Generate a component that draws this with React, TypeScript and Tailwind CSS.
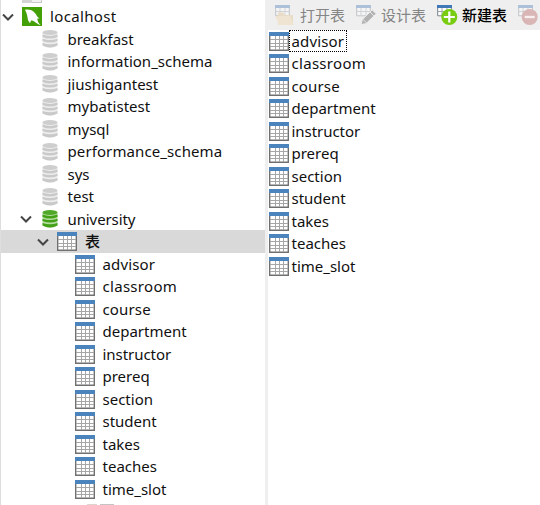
import React from 'react';

const databases = ['breakfast', 'information_schema', 'jiushigantest', 'mybatistest', 'mysql', 'performance_schema', 'sys', 'test'];
const tables = ['advisor', 'classroom', 'course', 'department', 'instructor', 'prereq', 'section', 'student', 'takes', 'teaches', 'time_slot'];

function TableIcon() {
  return (
    <svg className="h-[19px] w-5 shrink-0" viewBox="0 0 20 19">
      <path d="M.7 3v15.2h18.6V3" fill="#fff" stroke="#707070" strokeWidth="1.4" />
      <path d="M1 7.5h18M1 11.5h18M1 14.5h18M6.5 4v14M10.5 4v14M14.5 4v14" stroke="#a6a6a6" fill="none" />
      <path d="M0 0h20v4H0z" fill="#4b83bd" />
    </svg>
  );
}

function DatabaseIcon({ active = false }: { active?: boolean }) {
  const fill = active ? '#43a017' : '#c9c9c9';
  const edge = active ? '#50a829' : '#cecece';
  const band = active ? '#b5dda2' : '#eeeeee';
  return (
    <svg className="h-[18px] w-4 shrink-0" viewBox="0 0 16 18">
      <path d="M.5 2.5v13q7.5 4.5 15 0v-13z" fill={band} />
      <ellipse cx="8" cy="2.6" rx="7.5" ry="2.5" fill={edge} />
      <path d="M.5 4.5q7.5 2.8 15 0v2.4q-7.5 3-15 0zM.5 8.7q7.5 2.8 15 0v2.4q-7.5 3-15 0zM.5 12.9q7.5 2.8 15 0v2.6q-7.5 4.2-15 0z" fill={fill} />
    </svg>
  );
}

function Chevron() {
  return (
    <svg className="h-3 w-3 shrink-0" viewBox="0 0 12 12" fill="none" stroke="#454545" strokeWidth="2">
      <path d="m1 3.5 5 5 5-5" />
    </svg>
  );
}

function ServerIcon() {
  return (
    <svg className="h-[19px] w-5 shrink-0" viewBox="0 0 20 19">
      <path d="M0 0h20v19H0z" fill="#43a006" />
      <path d="M3 2.7c3-.6 6.3-.2 8.7 2 1.7 1.5 2.8 3 3.3 4.6l2.4 2.1-2.1.2c.2 2.5 1 4.5 3.2 6.5-2.6-.7-4.3-2.2-5.8-3.3-1.3-.9-2.3-1.2-3.7-1.3l-1 2.7-2-2.9C5.6 10.6 5.1 6.2 3 2.7Z" fill="#fff" />
    </svg>
  );
}

function MiniTable({ faded = false }: { faded?: boolean }) {
  return (
    <g opacity={faded ? 0.38 : 1}>
      <path d="M.7.8h13.6v10H.7z" fill="#fff" stroke="#77828d" />
      <path d="M5 2v8.5M10 2v8.5M1 6.5h13" stroke="#a0a8ae" />
      <path d="M0 0h15v3H0z" fill="#4079b6" />
    </g>
  );
}

function ToolIcon({ kind }: { kind: 'open' | 'design' | 'new' | 'delete' }) {
  return (
    <svg className="h-5 w-[21px] shrink-0" viewBox="0 0 21 20" fill="none">
      <MiniTable faded={kind !== 'new'} />
      {kind === 'open' && (
        <>
          <path d="M3 7.5h5l2 2.5h8v9.5H3z" fill="#e9dcc7" />
          <path d="M.3 11h14.5l4.2 9H4z" fill="#efe4d2" />
        </>
      )}
      {kind === 'design' && (
        <>
          <path d="m5 19.5 1.3-5L16.2 4.8l4 4L10 18.7z" fill="#b2b2b2" stroke="#efefef" />
          <path d="m14 7 4 4M6.8 14.2l3.8 3.8" stroke="#e6e6e6" />
        </>
      )}
      {kind === 'new' && (
        <>
          <circle cx="12.3" cy="12" r="8" fill="#78cc12" />
          <path d="M12.3 6.5v11M6.8 12h11" stroke="#fff" strokeWidth="2.2" />
        </>
      )}
      {kind === 'delete' && (
        <>
          <circle cx="11.7" cy="12" r="8" fill="#d9b5b5" />
          <path d="M6.7 12h10" stroke="#f7eeee" strokeWidth="2.4" />
        </>
      )}
    </svg>
  );
}

const tracking: Record<string, string> = {
  localhost: 'tracking-[0.35px]',
  classroom: 'tracking-[0.3px]',
  performance_schema: 'tracking-[0.1px]',
  advisor: 'tracking-[0.15px]',
  course: 'tracking-[0.15px]',
  mybatistest: 'tracking-[0.05px]',
  university: 'tracking-[-0.1px]',
  instructor: 'tracking-[-0.05px]',
};

function Label({ children }: { children: string }) {
  return <span className={'block pb-px whitespace-nowrap ' + (tracking[children] ?? '')}>{children}</span>;
}

export default function App() {
  return (
    <div className="flex h-[505px] w-[540px] overflow-hidden bg-white font-['Noto_Sans','Noto_Sans_CJK_SC',sans-serif] text-[15px] leading-[22px] text-[#101010]">
      <aside className="h-full w-[265px] shrink-0 overflow-hidden border-l border-[#dedede]">
        <div className="flex h-[5.25px] pl-[21px]">
          <div className="h-[3px] w-2.5 bg-[#d4d4d4]" />
          <div className="h-[3px] w-2.5 border-r border-b border-[#c8c8c8] bg-[#f2f2f2]" />
        </div>
        <div className="flex h-[22.5px] items-center pl-px">
          <Chevron />
          <span className="ml-2 flex"><ServerIcon /></span>
          <span className="ml-2"><Label>localhost</Label></span>
        </div>
        {databases.map((name) => (
          <div key={name} className="flex h-[22.5px] items-center gap-[9.5px] pl-[41px]">
            <DatabaseIcon />
            <Label>{name}</Label>
          </div>
        ))}
        <div className="flex h-[22.5px] items-center pl-[19px]">
          <Chevron />
          <span className="ml-2.5 flex"><DatabaseIcon active /></span>
          <span className="ml-[9.5px]"><Label>university</Label></span>
        </div>
        <div className="flex h-[22.5px] items-center bg-[#d9d9d9] pl-9">
          <Chevron />
          <span className="ml-2 flex"><TableIcon /></span>
          <span className="ml-2 font-medium"><Label>表</Label></span>
        </div>
        {tables.map((name) => (
          <div key={name} className="flex h-[22.5px] items-center gap-[7.5px] pl-[74px]">
            <TableIcon />
            <Label>{name}</Label>
          </div>
        ))}
        <div className="flex gap-[3px] pt-[4px] pl-[86px]">
          <div className="h-2 w-2.5 bg-[#ddd5ce]" />
          <div className="h-2 w-[14px] bg-[#c4c4c4]" />
        </div>
      </aside>
      <main className="flex min-w-0 flex-1 flex-col border-l-[3px] border-[#efefef]">
        <header className="flex h-[30px] shrink-0 items-center gap-[4px] overflow-hidden bg-[#efefef] pl-[7px] whitespace-nowrap text-[#858585]">
          <ToolIcon kind="open" /><span className="mr-[7px] w-[45px] pb-px">打开表</span>
          <ToolIcon kind="design" /><span className="mr-[7px] w-[45px] pb-px">设计表</span>
          <ToolIcon kind="new" /><span className="mr-[7px] w-[45px] pb-px font-medium text-black">新建表</span>
          <ToolIcon kind="delete" />
        </header>
        {tables.map((name, index) => (
          <div key={name} className="flex h-[22.5px] shrink-0 items-center pl-px">
            <TableIcon />
            <span className={index === 0 ? 'flex h-[22px] w-[58px] items-center border border-dotted border-black pl-[1.5px]' : 'pl-[2.5px]'}>
              <Label>{name}</Label>
            </span>
          </div>
        ))}
      </main>
    </div>
  );
}
